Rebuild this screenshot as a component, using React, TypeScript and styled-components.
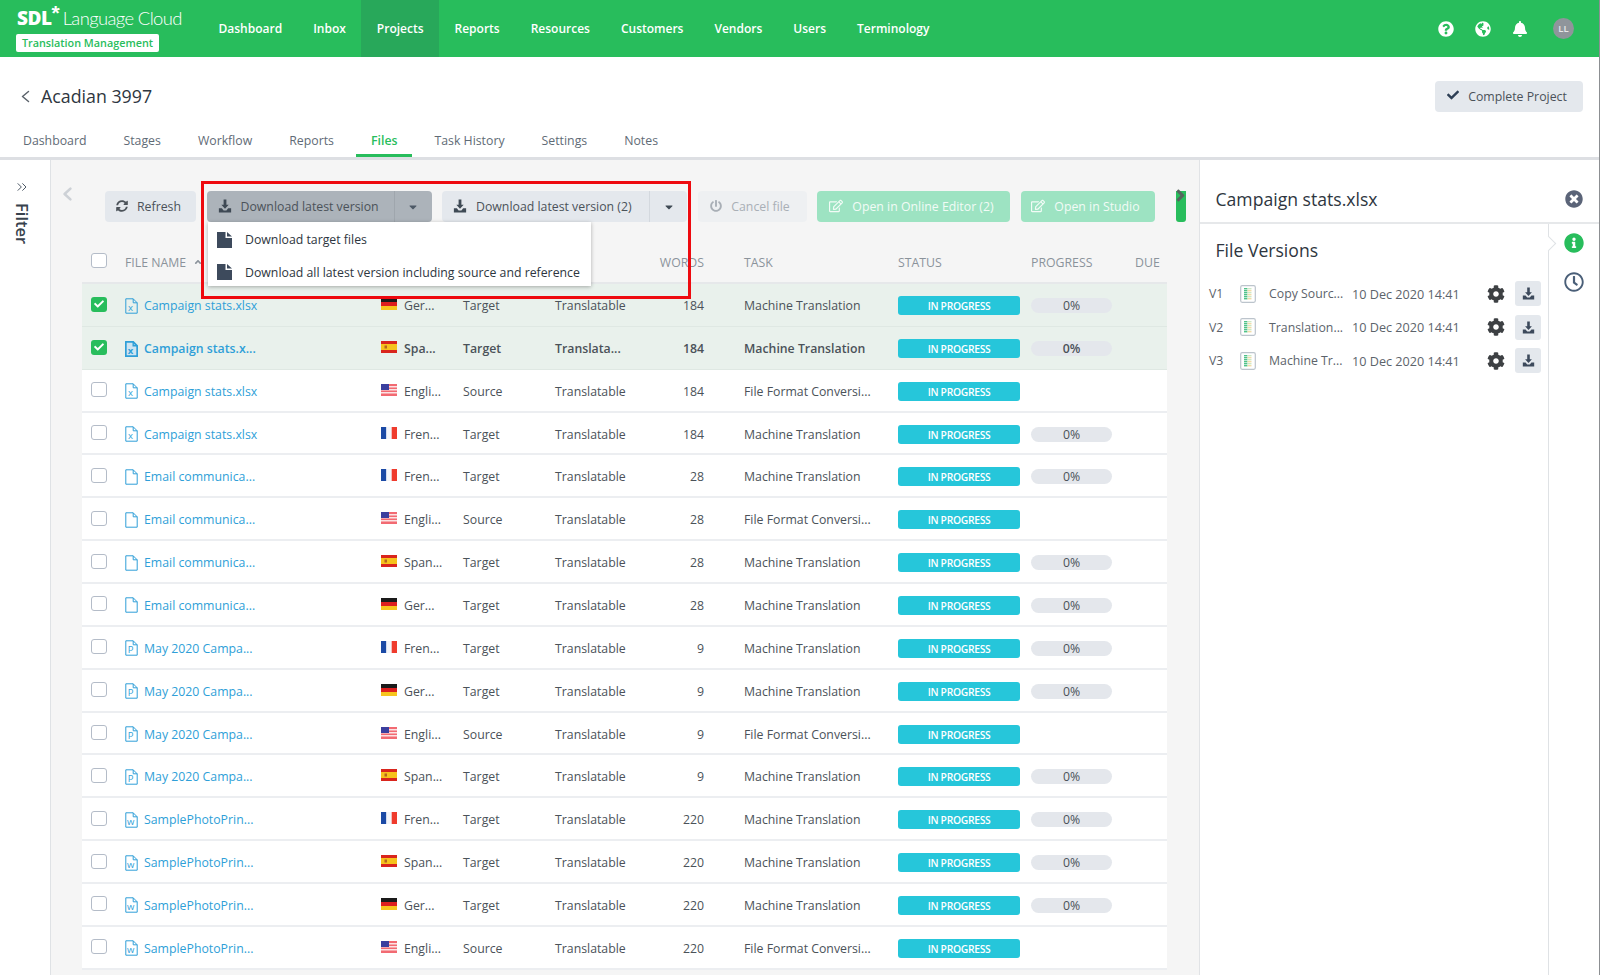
import React from "react";
import styled, { createGlobalStyle } from "styled-components";
import {
  FaQuestionCircle,
  FaGlobeAmericas,
  FaBell,
  FaCog,
  FaTimesCircle,
  FaInfoCircle,
  FaRegClock,
  FaCheck,
  FaSyncAlt,
  FaPowerOff,
  FaRegEdit,
  FaCaretDown,
  FaAngleUp,
  FaAngleRight,
} from "react-icons/fa";
import { ChevronsRight } from "lucide-react";

const GlobalStyle = createGlobalStyle`
  html, body { margin: 0; padding: 0; background: #fff; }
  body { font-family: "Open Sans", "Liberation Sans", sans-serif; font-size: 12.3px; color: #4b5259; }
  * { box-sizing: border-box; }
`;

const colors = {
  green: "#28bd5c",
  greenDark: "#28a85a",
  link: "#2f9fd8",
  text: "#4b5259",
  title: "#2e3640",
  btn: "#e4e8ed",
  cyan: "#26c6da",
};

const Page = styled.div`
  width: 1600px;
  height: 975px;
  overflow: hidden;
  border-right: 1px solid #8c8f92;
  display: flex;
  flex-direction: column;
  position: relative;
`;

const TopBar = styled.header`
  height: 57px;
  flex: none;
  display: flex;
  align-items: stretch;
  background: ${colors.green};
  color: #fff;
`;

const Logo = styled.div`
  width: 203px;
  flex: none;
  padding: 5px 0 0 16px;
  display: flex;
  flex-direction: column;
`;

const LogoLine = styled.div`
  display: flex;
  align-items: baseline;
  height: 29px;
  white-space: nowrap;
  padding-left: 1px;
`;

const LogoSdl = styled.span`
  font-family: "Open Sans", sans-serif;
  font-weight: 800;
  font-size: 19px;
  letter-spacing: -0.5px;
`;

const LogoStar = styled.span`
  font-family: "Liberation Sans", sans-serif;
  font-weight: 700;
  font-size: 21px;
  line-height: 10px;
  align-self: flex-start;
  margin-top: 3px;
  margin-right: 3px;
`;

const LogoName = styled.span`
  font-family: "Lato", sans-serif;
  font-weight: 300;
  font-size: 18.4px;
  letter-spacing: -0.6px;
`;

const LogoBadge = styled.div`
  width: 143px;
  height: 18px;
  background: #fff;
  border-radius: 2px;
  color: ${colors.green};
  font-size: 10.8px;
  font-weight: 600;
  line-height: 18px;
  text-align: center;
  white-space: nowrap;
`;

const Nav = styled.nav`
  display: flex;
  align-items: stretch;
  flex: 1;
`;

const NavItem = styled.a<{ $active?: boolean }>`
  padding: 0 15.5px;
  display: flex;
  align-items: center;
  font-weight: 600;
  font-size: 12px;
  background: ${(p) => (p.$active ? colors.greenDark : "transparent")};
`;

const TopIcons = styled.div`
  display: flex;
  align-items: center;
  gap: 21px;
  padding-right: 25px;
  font-size: 16px;
`;

const Avatar = styled.div`
  width: 21px;
  height: 21px;
  border-radius: 50%;
  background: #8f959b;
  color: #e6e8ea;
  font-size: 9.5px;
  font-weight: 600;
  display: flex;
  align-items: center;
  justify-content: center;
  margin-left: 4px;
`;

const TitleRow = styled.div`
  height: 66px;
  flex: none;
  padding: 12px 16px 0 21px;
  display: flex;
  align-items: center;
  justify-content: space-between;
`;

const TitleLeft = styled.div`
  display: flex;
  align-items: center;
  gap: 11px;
`;

const PageTitle = styled.h1`
  margin: 0;
  font-size: 17.8px;
  font-weight: 400;
  color: ${colors.title};
`;

const Button = styled.button<{ $w: number; $tone?: "pressed" | "muted" | "mint" }>`
  width: ${(p) => p.$w}px;
  height: 31px;
  flex: none;
  border: 0;
  border-radius: 4px;
  padding: 0 4px 0 0;
  display: flex;
  align-items: center;
  justify-content: center;
  gap: 9px;
  font: inherit;
  white-space: nowrap;
  background: ${(p) =>
    p.$tone === "pressed" ? "#acb3ba" : p.$tone === "mint" ? "#9de3c2" : p.$tone === "muted" ? "#eef0f2" : colors.btn};
  color: ${(p) =>
    p.$tone === "mint" ? "#f2fbf6" : p.$tone === "muted" ? "#a9afb6" : "#4b5259"};

  svg {
    margin-bottom: 2px;
  }
`;

const Tabs = styled.div`
  height: 37px;
  flex: none;
  padding-left: 8px;
  display: flex;
  gap: 7px;
  border-bottom: 3px solid #dddfe3;
`;

const Tab = styled.a<{ $active?: boolean }>`
  height: 34px;
  padding: 0 15px 5px;
  display: flex;
  align-items: flex-end;
  color: ${(p) => (p.$active ? colors.green : "#5f6b76")};
  font-weight: ${(p) => (p.$active ? 600 : 400)};
  border-bottom: 3px solid ${(p) => (p.$active ? colors.green : "transparent")};
`;

const Body = styled.div`
  flex: 1;
  min-height: 0;
  display: flex;
`;

const FilterRail = styled.aside`
  width: 51px;
  flex: none;
  background: #fff;
  border-right: 1px solid #dfe2e5;
  padding: 19px 0 0 14px;
  color: #4d5966;
  display: flex;
  flex-direction: column;
  align-items: flex-start;
  gap: 8px;
`;

const FilterLabel = styled.span`
  writing-mode: vertical-rl;
  font-size: 16.5px;
  font-weight: 600;
  color: #38424d;
  line-height: 16px;
`;

const Content = styled.main`
  width: 1148px;
  flex: none;
  background: #f5f5f5;
  display: flex;
  flex-direction: column;
  position: relative;
`;

const Toolbar = styled.div`
  height: 31px;
  margin-top: 31px;
  flex: none;
  display: flex;
  align-items: center;
  padding-left: 11px;
  gap: 10.5px;
`;

const BackChevron = styled.div`
  width: 32.5px;
  margin-bottom: 26px;
  display: flex;
`;

const SplitMain = styled.span`
  flex: 1;
  height: 100%;
  padding-left: 11px;
  display: flex;
  align-items: center;
  gap: 9px;
`;

const SplitCaret = styled.span<{ $dark?: boolean }>`
  width: 38px;
  height: 100%;
  margin-right: -4px;
  flex: none;
  display: flex;
  align-items: center;
  justify-content: center;
  color: ${(p) => (p.$dark ? "#4d5966" : "#3f4a55")};
  border-left: 1px solid ${(p) => (p.$dark ? "#9fa6ad" : "#d3d8de")};
  font-size: 12px;

  svg {
    margin-bottom: 0;
  }
`;

const GreenStub = styled.div`
  width: 10px;
  height: 31px;
  margin-left: 11px;
  background: ${colors.green};
  border-radius: 0 0 3px 3px;
  color: #56655d;
  font-size: 19px;
  position: relative;
  flex: none;
`;

const StubChevron = styled.span`
  position: absolute;
  left: -5px;
  top: -5px;
  display: flex;
`;

const DropMenu = styled.div`
  position: absolute;
  left: 157px;
  top: 62px;
  width: 383px;
  height: 64px;
  padding: 4px 0 0 9px;
  background: #fff;
  box-shadow: 0 1px 4px rgba(0, 0, 0, 0.3);
  z-index: 5;
  display: flex;
  flex-direction: column;
  gap: 5px;
`;

const DropItem = styled.div`
  height: 27.5px;
  display: flex;
  align-items: center;
  gap: 13px;
  color: ${colors.title};
  white-space: nowrap;
`;

const RedFrame = styled.div`
  position: absolute;
  left: 149.5px;
  top: 21px;
  width: 490px;
  height: 118px;
  border: 3px solid #ee0a0f;
  z-index: 6;
  pointer-events: none;
`;

const Table = styled.div`
  margin: 20px 0 0 31px;
  width: 1085px;
`;

const rowColumns = "34px 19px 237px 23px 59px 92px 100px 49px 194px 133px 104px 1fr";

const HeaderRow = styled.div`
  height: 42px;
  padding-left: 9px;
  display: grid;
  grid-template-columns: ${rowColumns};
  align-items: center;
  color: #8b939b;
  border-bottom: 2px solid #e6e8ea;
`;

const FileNameHead = styled.span`
  grid-column: 2 / 8;
  display: flex;
  align-items: center;
  gap: 7px;
`;

const Row = styled.div<{ $selected?: boolean; $bold?: boolean }>`
  height: 42.86px;
  padding: 2px 0 0 9px;
  display: grid;
  grid-template-columns: ${rowColumns};
  align-items: center;
  background: ${(p) => (p.$selected ? "#e9f1ec" : "#fff")};
  border-bottom: ${(p) => (p.$selected ? "1px solid #dfe8e3" : "2px solid #eceef1")};
  font-weight: ${(p) => (p.$bold ? 600 : 400)};
  white-space: nowrap;
`;

const Check = styled.span<{ $on?: boolean }>`
  width: 16px;
  height: 15px;
  margin-bottom: 3px;
  border-radius: 3px;
  display: flex;
  align-items: center;
  justify-content: center;
  color: #fff;
  font-size: 10px;
  background: ${(p) => (p.$on ? colors.green : "#fff")};
  border: ${(p) => (p.$on ? "0" : "1.5px solid #b4bcc8")};
`;

const FileName = styled.a`
  color: ${colors.link};
`;

const Right = styled.span`
  text-align: right;
`;

const TaskCell = styled.span`
  padding-left: 40px;
`;

const StatusBadge = styled.span`
  width: 122px;
  height: 19px;
  background: ${colors.cyan};
  border-radius: 3px;
  color: #fff;
  font-size: 10.3px;
  letter-spacing: -0.3px;
  font-weight: 600;
  line-height: 20px;
  text-align: center;
`;

const ProgressPill = styled.span`
  width: 81px;
  height: 15px;
  background: #e4e7ec;
  border-radius: 8px;
  line-height: 15px;
  text-align: center;
`;

const SidePanel = styled.aside`
  flex: 1;
  min-width: 0;
  border-left: 1px solid #e1e3e6;
  background: #fff;
  display: flex;
  flex-direction: column;
`;

const SideHead = styled.div`
  height: 64px;
  flex: none;
  border-bottom: 2px solid #e6e8ea;
  padding: 15px 16px 0 15.5px;
  display: flex;
  align-items: center;
  justify-content: space-between;
`;

const SideTitle = styled.h2`
  margin: 0;
  font-size: 17.6px;
  font-weight: 400;
  color: ${colors.title};
`;

const CloseIcon = styled.span`
  font-size: 18px;
  color: #5b6478;
  display: flex;
`;

const SideBody = styled.div`
  flex: 1;
  display: flex;
  min-height: 0;
`;

const SideMain = styled.div`
  width: 348px;
  flex: none;
`;

const SectionTitle = styled.h3`
  margin: 0;
  padding: 14px 0 0 15.5px;
  height: 53px;
  font-size: 17.6px;
  font-weight: 400;
  color: ${colors.title};
`;

const VersionRow = styled.div`
  height: 33.5px;
  padding-left: 9px;
  display: grid;
  grid-template-columns: 31px 29px 83px 135px 28px 26px;
  align-items: center;
  white-space: nowrap;
  color: #5c636b;
`;

const DateCell = styled.span`
  font-size: 12.65px;
`;

const GearIcon = styled.span`
  font-size: 18px;
  color: #3d4043;
  display: flex;
`;

const IconButton = styled.span`
  width: 26px;
  height: 25px;
  background: ${colors.btn};
  border-radius: 3px;
  display: flex;
  align-items: center;
  justify-content: center;
`;

const SideRail = styled.div`
  flex: 1;
  border-left: 1px solid #dfe2e5;
  position: relative;
  padding: 9px 0 0 15px;
  display: flex;
  flex-direction: column;
  gap: 19px;
  font-size: 20px;
`;

const Notch = styled.span`
  position: absolute;
  left: -6px;
  top: 14px;
  width: 11px;
  height: 11px;
  background: #fff;
  border-top: 1px solid #dfe2e5;
  border-right: 1px solid #dfe2e5;
  transform: rotate(45deg);
`;

const RailIcon = styled.span<{ $color: string }>`
  color: ${(p) => p.$color};
  display: flex;
`;

const LangFlag = styled.span`
  display: flex;
  margin-bottom: 3px;
`;

const DownloadIcon = ({ color = "#3d4a5c", size = 15 }: { color?: string; size?: number }) => (
  <svg width={size} height={size} viewBox="0 0 16 16" fill={color}>
    <path d="M6.4 0.5h3.2v6h2.6L8 11 3.8 6.5h2.6z" />
    <path d="M1 10.5h3.4L6.4 13h3.2l2-2.5H15v5H1z" />
  </svg>
);

const Chevron = ({ w, h, sw, color }: { w: number; h: number; sw: number; color: string }) => (
  <svg width={w} height={h} viewBox={`0 0 ${w} ${h}`} fill="none">
    <polyline points={`${w - sw},${sw} ${sw},${h / 2} ${w - sw},${h - sw}`} stroke={color} strokeWidth={sw} strokeLinecap="round" strokeLinejoin="round" />
  </svg>
);

const MenuFile = () => (
  <svg width="15" height="16" viewBox="0 0 15 16" fill="#3d4a5c">
    <path d="M0 0h8.5v6H15v10H0z" />
    <path d="M10 0l5 4.5h-5z" />
  </svg>
);

const FileGlyph = ({ letter, bold }: { letter?: string; bold?: boolean }) => (
  <svg width="13" height="16" viewBox="0 0 13 16" fill="none">
    <path
      d="M0.8 0.8h7.4l4 4v10.4H0.8z"
      stroke={colors.link}
      strokeWidth={bold ? 1.8 : 1}
      strokeLinejoin="round"
      fill={bold ? "#cfe4f1" : "none"}
    />
    <path d="M8.2 0.8v4h4" stroke={colors.link} strokeWidth={bold ? 1.4 : 1} fill="none" />
    {letter && (
      <text x="5.6" y="13.2" fontSize="9.5" fontFamily="Open Sans" fontWeight={bold ? 700 : 400} fill={colors.link} textAnchor="middle">
        {letter}
      </text>
    )}
  </svg>
);

const SheetGlyph = () => (
  <svg width="16" height="18" viewBox="0 0 16 18">
    <rect x="0.7" y="0.7" width="14.6" height="16.6" rx="1.5" fill="#fff" stroke="#bcc4cc" strokeWidth="1.2" />
    {[3, 5, 7, 9, 11, 13].map((y, i) => (
      <g key={y}>
        <rect x="4" y={y} width="3.5" height="1.4" fill="#4fc28a" />
        <rect x="7.5" y={y} width="4" height="1.4" fill={i % 2 ? "#f1dca8" : "#cfe8c4"} />
      </g>
    ))}
  </svg>
);

const Flag = ({ code }: { code: string }) => {
  if (code === "de")
    return (
      <svg width="16" height="12" viewBox="0 0 16 12">
        <rect width="16" height="4" fill="#1a1a1a" />
        <rect y="4" width="16" height="4" fill="#dd1f1f" />
        <rect y="8" width="16" height="4" fill="#f7c51e" />
      </svg>
    );
  if (code === "es")
    return (
      <svg width="16" height="12" viewBox="0 0 16 12">
        <rect width="16" height="12" fill="#d9251d" />
        <rect y="3" width="16" height="6" fill="#f6c21c" />
        <rect x="3.5" y="4.5" width="2.5" height="3" fill="#b5651d" />
      </svg>
    );
  if (code === "fr")
    return (
      <svg width="16" height="12" viewBox="0 0 16 12">
        <rect width="5.4" height="12" fill="#1b4aa5" />
        <rect x="5.4" width="5.3" height="12" fill="#f4f6fa" />
        <rect x="10.7" width="5.3" height="12" fill="#ef3b2d" />
      </svg>
    );
  return (
    <svg width="16" height="12" viewBox="0 0 16 12">
      <rect width="16" height="12" fill="#f26a72" />
      <rect y="2" width="16" height="1.5" fill="#fbe3e4" />
      <rect y="5" width="16" height="1.5" fill="#fbe3e4" />
      <rect y="8" width="16" height="1.5" fill="#fbe3e4" />
      <rect width="8" height="6" fill="#3b3f9e" />
    </svg>
  );
};

type FileRow = {
  name: string;
  icon?: string;
  flag: string;
  lang: string;
  type: string;
  usage?: string;
  words: number;
  task: string;
  selected?: boolean;
  bold?: boolean;
};

const MT = "Machine Translation";
const FF = "File Format Conversi...";

const rows: FileRow[] = [
  { name: "Campaign stats.xlsx", icon: "x", flag: "de", lang: "Ger...", type: "Target", words: 184, task: MT, selected: true },
  { name: "Campaign stats.x...", icon: "x", flag: "es", lang: "Spa...", type: "Target", usage: "Translata...", words: 184, task: MT, selected: true, bold: true },
  { name: "Campaign stats.xlsx", icon: "x", flag: "us", lang: "Engli...", type: "Source", words: 184, task: FF },
  { name: "Campaign stats.xlsx", icon: "x", flag: "fr", lang: "Fren...", type: "Target", words: 184, task: MT },
  { name: "Email communica...", flag: "fr", lang: "Fren...", type: "Target", words: 28, task: MT },
  { name: "Email communica...", flag: "us", lang: "Engli...", type: "Source", words: 28, task: FF },
  { name: "Email communica...", flag: "es", lang: "Span...", type: "Target", words: 28, task: MT },
  { name: "Email communica...", flag: "de", lang: "Ger...", type: "Target", words: 28, task: MT },
  { name: "May 2020 Campa...", icon: "P", flag: "fr", lang: "Fren...", type: "Target", words: 9, task: MT },
  { name: "May 2020 Campa...", icon: "P", flag: "de", lang: "Ger...", type: "Target", words: 9, task: MT },
  { name: "May 2020 Campa...", icon: "P", flag: "us", lang: "Engli...", type: "Source", words: 9, task: FF },
  { name: "May 2020 Campa...", icon: "P", flag: "es", lang: "Span...", type: "Target", words: 9, task: MT },
  { name: "SamplePhotoPrin...", icon: "w", flag: "fr", lang: "Fren...", type: "Target", words: 220, task: MT },
  { name: "SamplePhotoPrin...", icon: "w", flag: "es", lang: "Span...", type: "Target", words: 220, task: MT },
  { name: "SamplePhotoPrin...", icon: "w", flag: "de", lang: "Ger...", type: "Target", words: 220, task: MT },
  { name: "SamplePhotoPrin...", icon: "w", flag: "us", lang: "Engli...", type: "Source", words: 220, task: FF },
];

const navItems = ["Dashboard", "Inbox", "Projects", "Reports", "Resources", "Customers", "Vendors", "Users", "Terminology"];
const tabItems = ["Dashboard", "Stages", "Workflow", "Reports", "Files", "Task History", "Settings", "Notes"];
const versions = [
  { v: "V1", name: "Copy Sourc..." },
  { v: "V2", name: "Translation..." },
  { v: "V3", name: "Machine Tr..." },
];

export default function App() {
  return (
    <Page>
      <GlobalStyle />
      <TopBar>
        <Logo>
          <LogoLine>
            <LogoSdl>SDL</LogoSdl>
            <LogoStar>*</LogoStar>
            <LogoName>Language Cloud</LogoName>
          </LogoLine>
          <LogoBadge>Translation Management</LogoBadge>
        </Logo>
        <Nav>
          {navItems.map((n) => (
            <NavItem key={n} $active={n === "Projects"}>
              {n}
            </NavItem>
          ))}
        </Nav>
        <TopIcons>
          <FaQuestionCircle />
          <FaGlobeAmericas />
          <FaBell />
          <Avatar>LL</Avatar>
        </TopIcons>
      </TopBar>

      <TitleRow>
        <TitleLeft>
          <Chevron w={9} h={13} sw={1.5} color="#5b636b" />
          <PageTitle>Acadian 3997</PageTitle>
        </TitleLeft>
        <Button $w={148}>
          <FaCheck size={12} color="#2e3f55" />
          Complete Project
        </Button>
      </TitleRow>

      <Tabs>
        {tabItems.map((t) => (
          <Tab key={t} $active={t === "Files"}>
            {t}
          </Tab>
        ))}
      </Tabs>

      <Body>
        <FilterRail>
          <ChevronsRight size={16} strokeWidth={1.5} />
          <FilterLabel>Filter</FilterLabel>
        </FilterRail>

        <Content>
          <Toolbar>
            <BackChevron>
              <Chevron w={11} h={16} sw={2.6} color="#cdd1d6" />
            </BackChevron>
            <Button $w={91}>
              <FaSyncAlt size={12} />
              Refresh
            </Button>
            <Button $w={225} $tone="pressed">
              <SplitMain>
                <DownloadIcon color="#3f4a55" size={14} />
                Download latest version
              </SplitMain>
              <SplitCaret $dark>
                <FaCaretDown />
              </SplitCaret>
            </Button>
            <Button $w={245}>
              <SplitMain>
                <DownloadIcon color="#3f4a55" size={14} />
                Download latest version (2)
              </SplitMain>
              <SplitCaret>
                <FaCaretDown />
              </SplitCaret>
            </Button>
            <Button $w={109} $tone="muted">
              <FaPowerOff size={12} />
              Cancel file
            </Button>
            <Button $w={193} $tone="mint">
              <FaRegEdit size={14} />
              Open in Online Editor (2)
            </Button>
            <Button $w={134} $tone="mint">
              <FaRegEdit size={14} />
              Open in Studio
            </Button>
            <GreenStub>
              <StubChevron>
                <FaAngleRight />
              </StubChevron>
            </GreenStub>
          </Toolbar>

          <DropMenu>
            <DropItem>
              <MenuFile />
              Download target files
            </DropItem>
            <DropItem>
              <MenuFile />
              Download all latest version including source and reference
            </DropItem>
          </DropMenu>
          <RedFrame />

          <Table>
            <HeaderRow>
              <Check />
              <FileNameHead>
                FILE NAME
                <FaAngleUp size={10} />
              </FileNameHead>
              <Right>WORDS</Right>
              <TaskCell>TASK</TaskCell>
              <span>STATUS</span>
              <span>PROGRESS</span>
              <span>DUE</span>
            </HeaderRow>
            {rows.map((r, i) => (
              <Row key={i} $selected={r.selected} $bold={r.bold}>
                <Check $on={r.selected}>{r.selected && <FaCheck />}</Check>
                <FileGlyph letter={r.icon} bold={r.bold} />
                <FileName>{r.name}</FileName>
                <LangFlag>
                  <Flag code={r.flag} />
                </LangFlag>
                <span>{r.lang}</span>
                <span>{r.type}</span>
                <span>{r.usage ?? "Translatable"}</span>
                <Right>{r.words}</Right>
                <TaskCell>{r.task}</TaskCell>
                <StatusBadge>IN PROGRESS</StatusBadge>
                {r.task === MT ? <ProgressPill>0%</ProgressPill> : <span />}
              </Row>
            ))}
          </Table>
        </Content>

        <SidePanel>
          <SideHead>
            <SideTitle>Campaign stats.xlsx</SideTitle>
            <CloseIcon>
              <FaTimesCircle />
            </CloseIcon>
          </SideHead>
          <SideBody>
            <SideMain>
              <SectionTitle>File Versions</SectionTitle>
              {versions.map((v) => (
                <VersionRow key={v.v}>
                  <span>{v.v}</span>
                  <SheetGlyph />
                  <span>{v.name}</span>
                  <DateCell>10 Dec 2020 14:41</DateCell>
                  <GearIcon>
                    <FaCog />
                  </GearIcon>
                  <IconButton>
                    <DownloadIcon size={13} />
                  </IconButton>
                </VersionRow>
              ))}
            </SideMain>
            <SideRail>
              <Notch />
              <RailIcon $color={colors.green}>
                <FaInfoCircle />
              </RailIcon>
              <RailIcon $color="#4a5f78">
                <FaRegClock />
              </RailIcon>
            </SideRail>
          </SideBody>
        </SidePanel>
      </Body>
    </Page>
  );
}
